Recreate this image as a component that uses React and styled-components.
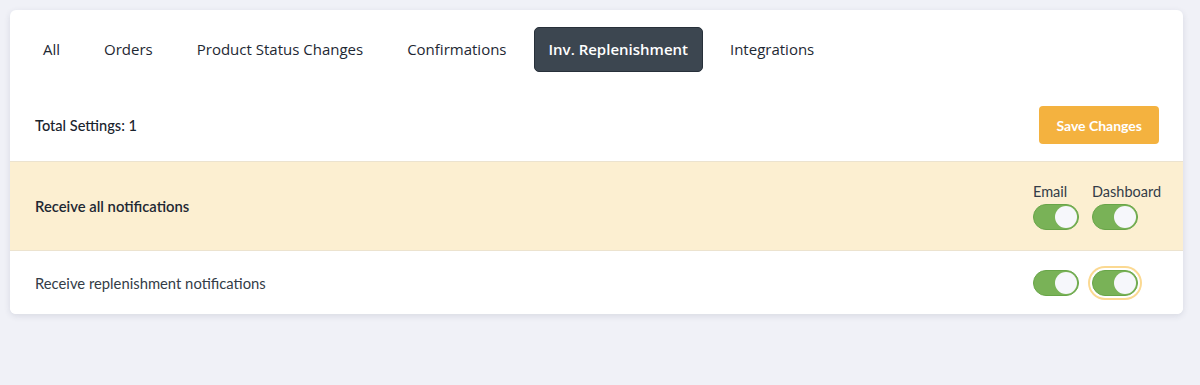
import React from 'react';
import styled, { createGlobalStyle } from 'styled-components';

const GlobalStyle = createGlobalStyle`
  body {
    margin: 0;
    background: #f0f1f7;
    font-family: "Lato", sans-serif;
  }
`;

const Page = styled.div`
  padding: 10px 17px 10px 10px;
`;

const Card = styled.div`
  background: #fff;
  border-radius: 6px;
  box-shadow: 0 2px 6px rgba(40, 50, 80, 0.12);
  overflow: hidden;
`;

const TabBar = styled.div`
  display: flex;
  gap: 10px;
  padding: 17px 17px 0 16px;
`;

const Tab = styled.div`
  height: 45px;
  box-sizing: border-box;
  display: flex;
  align-items: center;
  padding: 0 ${(p) => (p.$active ? 14 : 16)}px 2px;
  border-radius: 5px;
  font-family: "Open Sans", sans-serif;
  font-size: 15px;
  font-weight: ${(p) => (p.$active ? 600 : 500)};
  color: ${(p) => (p.$active ? '#fff' : '#1e2833')};
  background: ${(p) => (p.$active ? '#3c4650' : 'transparent')};
  border: 1px solid ${(p) => (p.$active ? '#27303a' : 'transparent')};
`;

const Header = styled.div`
  display: flex;
  justify-content: space-between;
  align-items: center;
  margin-top: 34px;
  padding: 0 24px 17px 25px;
  border-bottom: 1px solid #ece3cf;
`;

const Total = styled.div`
  font-size: 14.6px;
  font-weight: 500;
  color: #1a232d;
`;

const SaveButton = styled.button`
  height: 38px;
  padding: 0 17px;
  border: none;
  border-radius: 4px;
  background: #f4b23f;
  color: #fff;
  font-family: "Lato", sans-serif;
  font-weight: 700;
  font-size: 14px;
`;

const Row = styled.div`
  display: flex;
  align-items: center;
  justify-content: space-between;
  height: ${(p) => p.$h}px;
  padding: 0 23px 0 25px;
  background: ${(p) => (p.$highlight ? '#fcefd1' : '#fff')};
  border-bottom: ${(p) => (p.$highlight ? '1px solid #ece3cf' : 'none')};
`;

const RowLabel = styled.div`
  font-size: 14.8px;
  font-weight: ${(p) => (p.$bold ? 600 : 400)};
  color: ${(p) => (p.$bold ? '#1e2833' : '#333c47')};
`;

const Controls = styled.div`
  display: flex;
  gap: 13px;
`;

const Column = styled.div`
  width: ${(p) => p.$w}px;
  display: flex;
  flex-direction: column;
  align-items: flex-start;
  gap: 3px;
`;

const ColLabel = styled.div`
  font-size: 14.5px;
  font-weight: 400;
  color: #333c47;
  line-height: 18px;
  white-space: nowrap;
`;

const Toggle = styled.div`
  position: relative;
  width: 46px;
  height: 26px;
  box-sizing: border-box;
  border-radius: 13px;
  background: #79b257;
  border: 1px solid #68a548;
  box-shadow: ${(p) => (p.$focus ? '0 0 0 2px #fff, 0 0 0 4px #fbd992' : 'none')};
`;

const Knob = styled.div`
  position: absolute;
  top: 1px;
  right: 1px;
  width: 22px;
  height: 22px;
  border-radius: 50%;
  background: #f6f7fb;
`;

const tabs = ['All', 'Orders', 'Product Status Changes', 'Confirmations', 'Inv. Replenishment', 'Integrations'];

export default function App() {
  return (
    <>
      <GlobalStyle />
      <Page>
        <Card>
          <TabBar>
            {tabs.map((t) => (
              <Tab key={t} $active={t === 'Inv. Replenishment'}>{t}</Tab>
            ))}
          </TabBar>
          <Header>
            <Total>Total Settings: 1</Total>
            <SaveButton>Save Changes</SaveButton>
          </Header>
          <Row $highlight $h={88}>
            <RowLabel $bold>Receive all notifications</RowLabel>
            <Controls>
              <Column $w={46}>
                <ColLabel>Email</ColLabel>
                <Toggle><Knob /></Toggle>
              </Column>
              <Column $w={68}>
                <ColLabel>Dashboard</ColLabel>
                <Toggle><Knob /></Toggle>
              </Column>
            </Controls>
          </Row>
          <Row $h={63}>
            <RowLabel>Receive replenishment notifications</RowLabel>
            <Controls>
              <Column $w={46}>
                <Toggle><Knob /></Toggle>
              </Column>
              <Column $w={68}>
                <Toggle $focus><Knob /></Toggle>
              </Column>
            </Controls>
          </Row>
        </Card>
      </Page>
    </>
  );
}
